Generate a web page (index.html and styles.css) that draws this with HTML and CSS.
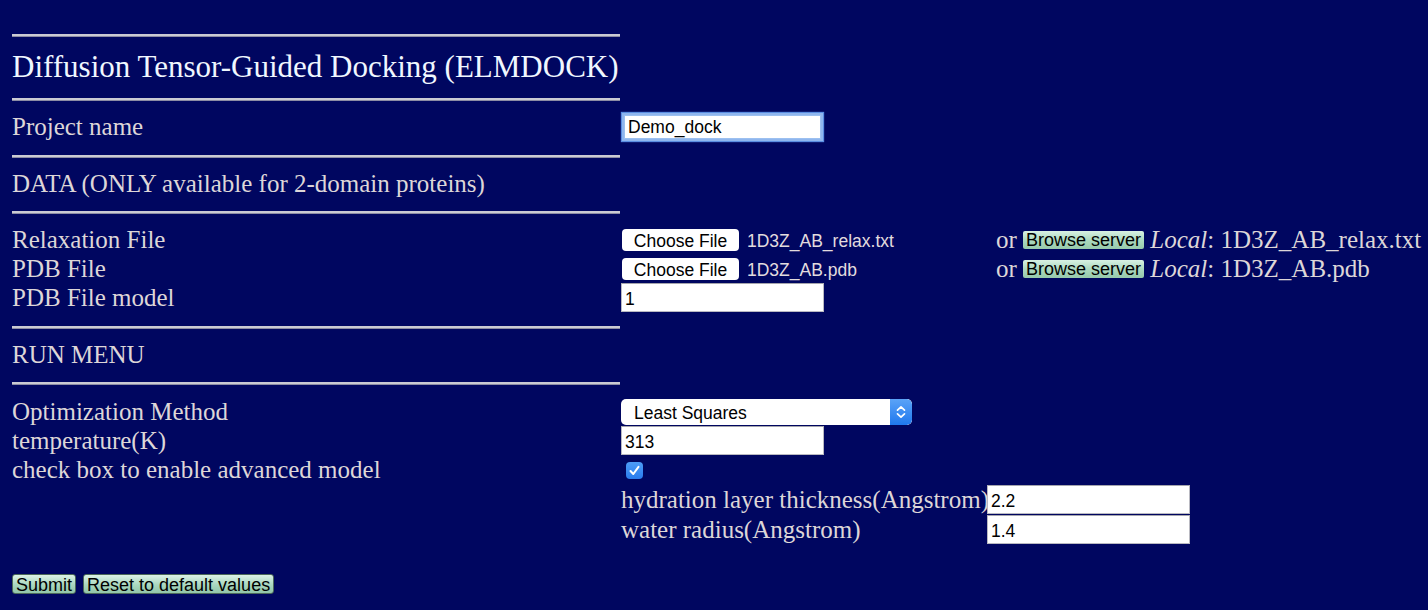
FILE: index.html
```html
<!DOCTYPE html>
<html>
<head>
<meta charset="utf-8">
<link rel="stylesheet" href="styles.css">
</head>
<body>
<div class="page">
  <div class="sep"></div>
  <div class="title">Diffusion Tensor-Guided Docking (ELMDOCK)</div>
  <div class="sep"></div>
  <div class="row r-project">
    <div class="label">Project name</div>
    <div class="ctrl"><input class="text focus" type="text" value="Demo_dock"></div>
  </div>
  <div class="sep"></div>
  <div class="section">DATA (ONLY available for 2-domain proteins)</div>
  <div class="sep"></div>
  <div class="group g-data">
    <div class="row">
      <div class="label">Relaxation File</div>
      <div class="ctrl"><span class="choose">Choose File</span><span class="fname">1D3Z_AB_relax.txt</span></div>
      <div class="extra">or <span class="browse">Browse server</span> <i>Local</i>: 1D3Z_AB_relax.txt</div>
    </div>
    <div class="row">
      <div class="label">PDB File</div>
      <div class="ctrl"><span class="choose">Choose File</span><span class="fname">1D3Z_AB.pdb</span></div>
      <div class="extra">or <span class="browse">Browse server</span> <i>Local</i>: 1D3Z_AB.pdb</div>
    </div>
    <div class="row">
      <div class="label">PDB File model</div>
      <div class="ctrl"><input class="text" type="text" value="1"></div>
    </div>
  </div>
  <div class="sep"></div>
  <div class="section">RUN MENU</div>
  <div class="sep"></div>
  <div class="group g-run">
    <div class="row">
      <div class="label">Optimization Method</div>
      <div class="ctrl">
        <div class="select"><span class="sel-text">Least Squares</span><span class="sel-arrow"><svg width="12" height="16" viewBox="0 0 12 16"><path d="M2.5 6.2 L6 2.8 L9.5 6.2 M2.5 9.8 L6 13.2 L9.5 9.8" fill="none" stroke="#fff" stroke-width="1.7" stroke-linecap="round" stroke-linejoin="round"/></svg></span></div>
      </div>
    </div>
    <div class="row">
      <div class="label">temperature(K)</div>
      <div class="ctrl"><input class="text" type="text" value="313"></div>
    </div>
    <div class="row">
      <div class="label">check box to enable advanced model</div>
      <div class="ctrl"><span class="check"><svg width="17" height="17" viewBox="0 0 17 17"><path d="M4.5 9 L7.3 12 L12.5 4.8" fill="none" stroke="#fff" stroke-width="2" stroke-linecap="round" stroke-linejoin="round"/></svg></span></div>
    </div>
    <div class="adv">
      <div class="adv-row">
        <div class="adv-label">hydration layer thickness(Angstrom)</div>
        <input class="text" type="text" value="2.2">
      </div>
      <div class="adv-row">
        <div class="adv-label">water radius(Angstrom)</div>
        <input class="text" type="text" value="1.4">
      </div>
    </div>
  </div>
  <div class="buttons">
    <span class="gbtn">Submit</span>
    <span class="gbtn">Reset to default values</span>
  </div>
</div>
</body>
</html>
```
FILE: styles.css
```css
html, body {
  margin: 0;
  padding: 0;
  background: #000660;
}
body {
  font-family: "Liberation Serif", "Times New Roman", serif;
  color: #ddd6d8;
}
.page {
  padding: 34px 0 0 12px;
  width: 1416px;
}
.sep {
  width: 608px;
  height: 3px;
  box-sizing: border-box;
  border-top: 2px solid #cacad3;
  border-bottom: 1px solid #8c8ca4;
}
.title {
  font-size: 31px;
  color: #f0f7ff;
  height: 61px;
  line-height: 60px;
  white-space: nowrap;
}
.section {
  font-size: 25px;
  height: 53px;
  line-height: 52px;
  white-space: nowrap;
}
.row {
  display: grid;
  grid-template-columns: 609px 375px auto;
  align-items: center;
  font-size: 25px;
  height: 29px;
}
.r-project {
  height: 54px;
  padding-bottom: 3px;
  box-sizing: border-box;
}
.group.g-data {
  padding: 11px 0 14px;
}
.group.g-run {
  padding: 12px 0 0;
}
.label {
  line-height: 29px;
  white-space: nowrap;
}
.ctrl {
  display: flex;
  align-items: center;
}
input.text {
  width: 203px;
  height: 29px;
  box-sizing: border-box;
  border: 1px solid #b9b9c1;
  border-top-color: #a5a5ad;
  background: #fff;
  font-family: "Liberation Sans", Arial, sans-serif;
  font-size: 17.5px;
  color: #000;
  padding: 3px 3px 0;
  margin: 0;
  outline: none;
}
input.text.focus {
  width: 197px;
  height: 24px;
  margin-left: 3px;
  padding-top: 2px;
  border: 1px solid #9cc0f0;
  box-shadow: 0 0 0 2px #8fb6ee, 0 0 1px 3px #5b8ee2;
}
.choose {
  display: inline-block;
  margin-left: 1px;
  width: 117px;
  height: 22px;
  box-sizing: border-box;
  padding-top: 3px;
  background: #fff;
  border-radius: 4px;
  color: #000;
  font-family: "Liberation Sans", Arial, sans-serif;
  font-size: 17.5px;
  line-height: 19px;
  text-align: center;
}
.fname {
  margin-left: 8px;
  padding-top: 3px;
  font-family: "Liberation Sans", Arial, sans-serif;
  font-size: 17.5px;
  color: #e2dcde;
}
.extra {
  white-space: nowrap;
}
.browse {
  display: inline-block;
  height: 18px;
  padding: 0 3px;
  line-height: 19px;
  vertical-align: 2px;
  background: linear-gradient(#d8f1e3, #acd9c0 50%, #96c9ab);
  border-radius: 2px;
  color: #000;
  font-family: "Liberation Sans", Arial, sans-serif;
  font-size: 18px;
}
.select {
  width: 291px;
  height: 26px;
  background: #fff;
  border-radius: 5px;
  display: flex;
  align-items: center;
  justify-content: space-between;
  overflow: hidden;
}
.sel-text {
  padding-left: 13px;
  padding-top: 3px;
  font-family: "Liberation Sans", Arial, sans-serif;
  font-size: 17.5px;
  color: #000;
}
.sel-arrow {
  width: 22px;
  height: 26px;
  background: linear-gradient(#5ba3f7, #1f78ee);
  display: flex;
  align-items: center;
  justify-content: center;
  border-radius: 0 5px 5px 0;
}
.sel-arrow svg { display: block; }
.check {
  display: inline-block;
  margin-left: 5px;
  margin-top: 2px;
  width: 17px;
  height: 17px;
  border-radius: 4px;
  background: linear-gradient(#4d9cf7, #2a7cee);
}
.check svg { display: block; }
.adv {
  margin-left: 609px;
  display: flex;
  flex-direction: column;
  gap: 1px;
  padding-top: 1px;
}
.adv-row {
  display: flex;
  align-items: center;
  font-size: 25px;
  height: 29px;
}
.adv-label {
  width: 366px;
  white-space: nowrap;
}
.buttons {
  margin-top: 30px;
  display: flex;
  gap: 7px;
}
.gbtn {
  display: inline-block;
  height: 20px;
  box-sizing: border-box;
  padding: 0 3px;
  line-height: 20px;
  border: 1px solid #4c6a5a;
  border-radius: 3px;
  background: linear-gradient(#dcf2e6, #a9d7bf 55%, #92c6a9);
  color: #000;
  font-family: "Liberation Sans", Arial, sans-serif;
  font-size: 18px;
}
```
